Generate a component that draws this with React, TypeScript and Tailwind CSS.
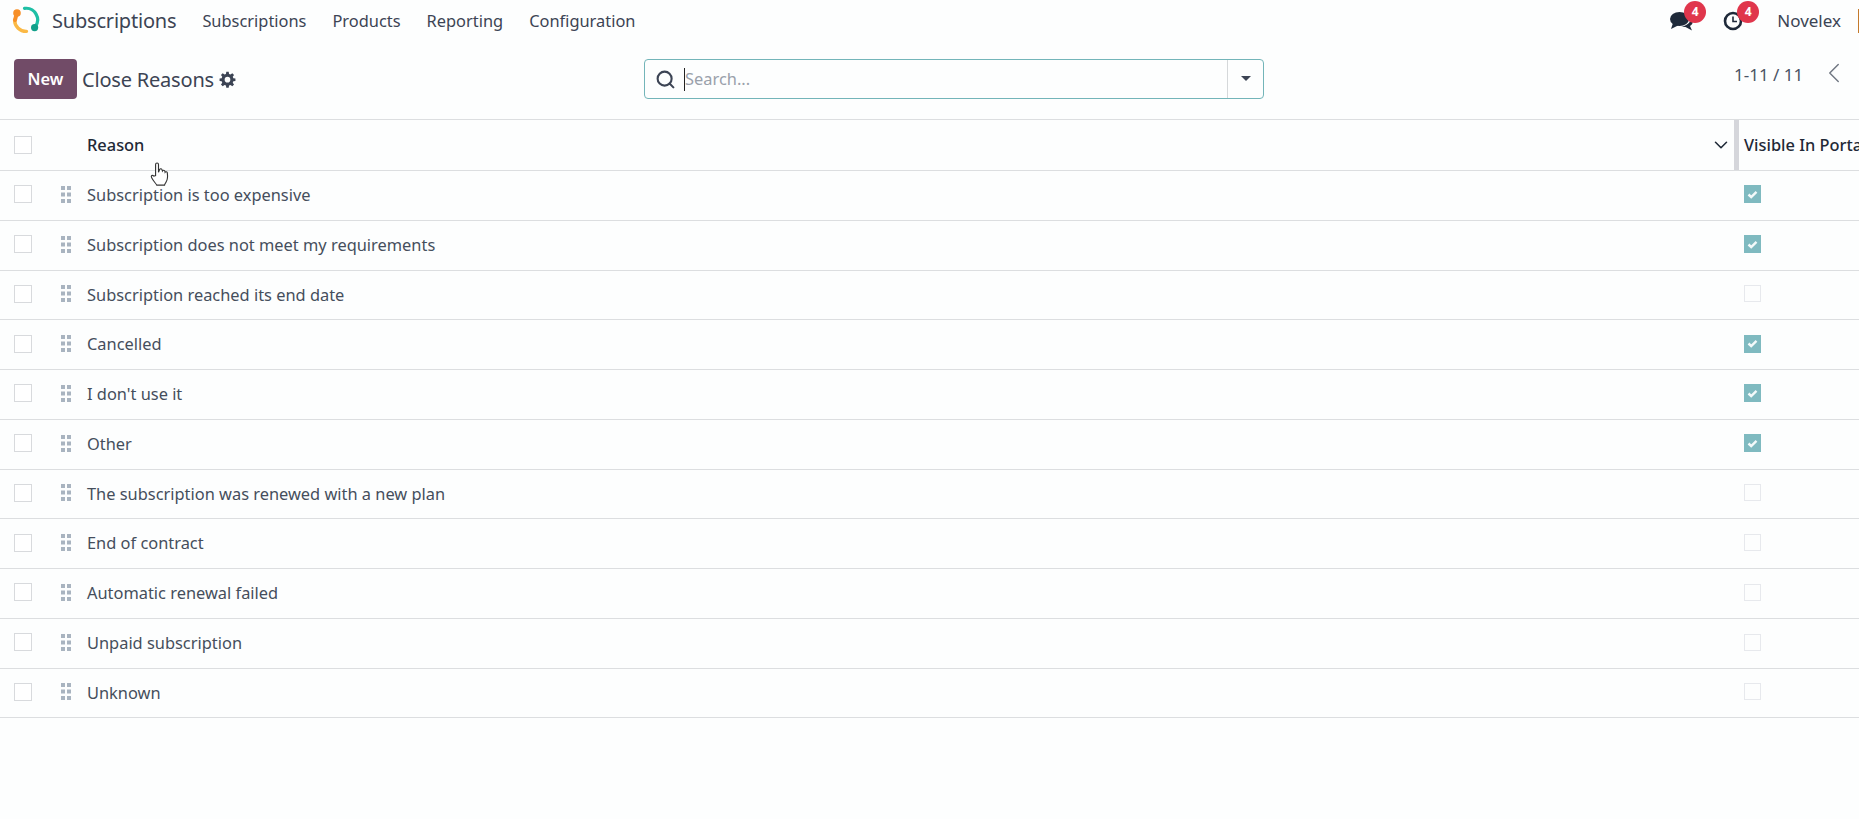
import React from "react";
import { ChevronDown, ChevronLeft, Search } from "lucide-react";

const rows: [string, boolean][] = [
  ["Subscription is too expensive", true],
  ["Subscription does not meet my requirements", true],
  ["Subscription reached its end date", false],
  ["Cancelled", true],
  ["I don't use it", true],
  ["Other", true],
  ["The subscription was renewed with a new plan", false],
  ["End of contract", false],
  ["Automatic renewal failed", false],
  ["Unpaid subscription", false],
  ["Unknown", false],
];

function Logo() {
  return (
    <svg width="28" height="28" viewBox="0 0 28 28" fill="none" className="-mt-[2px]">
      <path d="M2.6 14 A 11.5 11.5 0 0 0 14.5 25.4" stroke="#fbb945" strokeWidth="3.4" strokeLinecap="round" />
      <path d="M12.5 2.4 A 11.5 11.5 0 0 1 23 21" stroke="#1ebfa5" strokeWidth="3.2" strokeLinecap="round" />
      <path d="M4.8 7.2 L3 14" stroke="#f78f28" strokeWidth="4" strokeLinecap="round" />
      <circle cx="5" cy="7" r="3.8" fill="#f78f28" />
      <circle cx="22.6" cy="21.6" r="3.6" fill="#12a08a" />
    </svg>
  );
}

function Grip() {
  return (
    <svg width="10" height="17" viewBox="0 0 10 17" className="fill-[#a9b4c0] block mb-[2px]">
      {[0, 6.5, 13].map((y) => (
        <g key={y}>
          <rect x="0" y={y} width="4" height="4" />
          <rect x="6" y={y} width="4" height="4" />
        </g>
      ))}
    </svg>
  );
}

function Box({ lift }: { lift?: boolean }) {
  return <div className={lift ? "w-[18px] h-[18px] mb-[2px] border border-[#d8dadd] bg-white" : "w-[18px] h-[18px] border border-[#d8dadd] bg-white"} />;
}

function Portal({ on }: { on: boolean }) {
  if (!on) return <div className="w-[17px] h-[17px] mb-[2px] border border-[#e7e9ed] bg-[#fdfefe]" />;
  return (
    <div className="w-[17px] h-[18px] mb-[2px] bg-[#7fbac0] flex items-center justify-center">
      <svg width="11" height="9" viewBox="0 0 11 9" fill="none">
        <path d="M1.5 4.5 L4.2 7 L9.5 1.8" stroke="#f4fafa" strokeWidth="2.4" />
      </svg>
    </div>
  );
}

function Badge({ n }: { n: number }) {
  return (
    <span className="left-[14px] absolute -top-[10px] w-[22px] h-[22px] rounded-full bg-[#e0364c] text-white text-[12px] font-bold flex items-center justify-center">
      {n}
    </span>
  );
}

export default function App() {
  return (
    <div className="w-[1859px] h-[819px] overflow-hidden bg-[#fdfefe] text-[#374151] font-['Noto_Sans','Open_Sans',sans-serif] text-[16.4px]">
      <header className="h-[42px] flex items-center pl-[12px]">
        <Logo />
        <span className="ml-[12px] text-[20px] text-[#3c4454] tracking-[-0.2px]">Subscriptions</span>
        <nav className="flex ml-[26px] gap-[26px] text-[#3c4454]">
          <span>Subscriptions</span>
          <span>Products</span>
          <span>Reporting</span>
          <span>Configuration</span>
        </nav>
        <div className="ml-auto flex items-center">
          <div className="relative mr-[29px] text-[#1f2937]">
            <svg width="24" height="20" viewBox="0 0 24 20" fill="#1f2a3a">
              <ellipse cx="9.5" cy="8" rx="9.5" ry="7" />
              <path d="M3 12 L1 18 L9 14 Z" />
              <path d="M21 7.5 C 23.5 10, 23 13.5 20 15 L 22 19.5 L 15.5 16 L 11 15.8 C 16 15, 20.5 12, 21 7.5 Z" />
            </svg>
            <Badge n={4} />
          </div>
          <div className="relative mr-[34px]">
            <svg width="20" height="20" viewBox="0 0 20 20" fill="none" stroke="#1f2a3a">
              <circle cx="10" cy="10" r="8" strokeWidth="2.6" />
              <path d="M10 5.5 V10.5 H14" strokeWidth="1.6" />
            </svg>
            <Badge n={4} />
          </div>
          <span className="text-[#3c4454] mr-[17px] text-[17px]">Novelex</span>
          <div className="w-px h-[24px] bg-[#c47a2c]" />
        </div>
      </header>

      <div className="h-[78px] border-b border-[#dcdee0] relative flex items-start pl-[14px] pt-[17px]">
        <button className="w-[63px] h-[40px] rounded-[4px] bg-[#714b67] text-white text-[16.4px] font-semibold">New</button>
        <span className="ml-[5px] mt-[6px] text-[20px] text-[#3c4454] tracking-[-0.2px]">Close Reasons</span>
        <svg className="ml-[5px] mt-[12px]" width="17" height="17" viewBox="0 0 24 24" fill="#3c4454">
          <path fillRule="evenodd" d="M13.7 1h-3.4l-.5 3.1a8 8 0 0 0-2 .8L5.2 3.1 2.8 5.5l1.8 2.6a8 8 0 0 0-.8 2L.8 10.6v3.4l3 .5a8 8 0 0 0 .8 2l-1.8 2.6 2.4 2.4 2.6-1.8a8 8 0 0 0 2 .8l.5 3h3.4l.5-3a8 8 0 0 0 2-.8l2.6 1.8 2.4-2.4-1.8-2.6a8 8 0 0 0 .8-2l3-.5v-3.4l-3-.5a8 8 0 0 0-.8-2l1.8-2.6-2.4-2.4-2.6 1.8a8 8 0 0 0-2-.8zM12 8.2a4 4 0 1 1 0 8 4 4 0 0 1 0-8z" />
        </svg>

        <div className="absolute left-[644px] top-[17px] w-[620px] h-[40px] border border-[#73b5b9] rounded-[4px] flex items-center">
          <Search size={21} strokeWidth={2.4} className="ml-[10px] text-[#3c4454]" />
          <div className="ml-[8px] w-px h-[23px] bg-[#222]" />
          <span className="text-[#9aa1ab]">Search...</span>
          <div className="ml-auto w-[36px] h-full border-l border-[#d5d8da] relative">
            <div className="absolute left-[13px] top-[16px] w-0 h-0 border-l-[5px] border-r-[5px] border-t-[5px] border-l-transparent border-r-transparent border-t-[#3c4454]" />
          </div>
        </div>

        <span className="absolute left-[1734px] top-[20px] text-[#4a5464] text-[17px]">1-11 / 11</span>
        <ChevronLeft size={34} strokeWidth={1} className="absolute left-[1817px] top-[14px] text-[#707782]" />
      </div>

      <div className="h-[51px] border-b border-[#dcdee0] flex items-center font-medium">
        <div className="w-[87px] pl-[14px]"><Box /></div>
        <span className="text-[#1f2937] flex-1">Reason</span>
        <ChevronDown size={22} strokeWidth={1.7} className="text-[#1f2937] mr-[2px]" />
        <div className="w-[5px] h-full bg-[#d5d6db]" />
        <span className="ml-[5px] w-[115px] text-[#1f2937] whitespace-nowrap">Visible In Portal</span>
      </div>

      {rows.map(([label, on]) => (
        <div key={label} className="h-[49.75px] border-b border-[#dcdee0] flex items-center">
          <div className="w-[61px] pl-[14px]"><Box lift /></div>
          <div className="w-[26px]"><Grip /></div>
          <span className="flex-1 text-[#454e5c]">{label}</span>
          <div className="w-[115px]"><Portal on={on} /></div>
        </div>
      ))}

      <svg className="absolute left-[150px] top-[161px]" width="19" height="27" viewBox="0 0 17 24" fill="#fff" stroke="#333" strokeWidth="1">
        <path d="M5 13 V3 a1.3 1.3 0 0 1 2.6 0 V10 l1 -2.5 a1.2 1.2 0 0 1 2.2 .3 l.3 1 a1.2 1.2 0 0 1 2.2 .2 l.2 1 a1.1 1.1 0 0 1 2 .5 c.4 3 .2 6 -1 8 c-1 2 -1.5 2.5 -1.5 3 H6 c-1 -2 -3 -3.5 -4.5 -6.5 c-1 -2 .5 -3 2 -1.5 Z" />
      </svg>
    </div>
  );
}
